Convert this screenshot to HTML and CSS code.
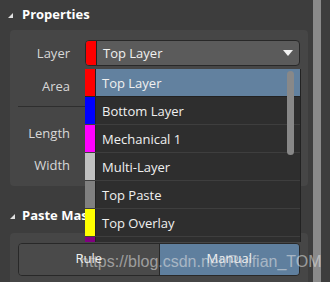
FILE: index.html
```html
<!DOCTYPE html>
<html lang="en">
<head>
    <meta charset="UTF-8">
    <title>Properties</title>
    <link rel="stylesheet" href="styles.css">
</head>
<body>
    <div class="frame">
        <div class="main">
            <div class="heading"><span class="tri"></span>Properties</div>
            <div class="panel">
                <div class="row">
                    <div class="label">Layer</div>
                    <div class="combo">
                        <span class="swatch" style="background:#ff0000"></span>
                        <span class="combo-text">Top Layer</span>
                        <svg class="arrow" width="10" height="6" viewBox="0 0 10 6"><path d="M0 0H10L5 6Z" fill="#f2f2f2"/></svg>
                    </div>
                </div>
                <div class="row short">
                    <div class="label">Area</div>
                </div>
                <div class="divider"></div>
                <div class="row">
                    <div class="label">Length</div>
                </div>
                <div class="row">
                    <div class="label">Width</div>
                </div>
            </div>

            <div class="heading second"><span class="tri"></span>Paste Mask Expansion</div>
            <div class="panel bottom">
                <div class="toggle">
                    <div class="opt">Rule</div>
                    <div class="opt on">Manual</div>
                </div>
            </div>
        </div>
        <div class="gutter"></div>
    </div>

    <!-- open dropdown list -->
    <div class="list">
        <div class="item sel"><span class="swatch" style="background:#ff0000"></span><span>Top Layer</span></div>
        <div class="item"><span class="swatch" style="background:#0000ff"></span><span>Bottom Layer</span></div>
        <div class="item"><span class="swatch" style="background:#ff00ff"></span><span>Mechanical 1</span></div>
        <div class="item"><span class="swatch" style="background:#c0c0c0"></span><span>Multi-Layer</span></div>
        <div class="item"><span class="swatch" style="background:#808080"></span><span>Top Paste</span></div>
        <div class="item"><span class="swatch" style="background:#ffff00"></span><span>Top Overlay</span></div>
        <div class="item"><span class="swatch" style="background:#800080"></span><span>Bottom Overlay</span></div>
        <div class="list-bar"></div>
    </div>

    <div class="mark">https://blog.csdn.net/Ruifian_TOM</div>
</body>
</html>
```

FILE: styles.css
```css
body {
    margin: 0;
    width: 330px;
    height: 282px;
    overflow: hidden;
    background-color: #3d3d3d;
    font-family: 'Open Sans', 'Noto Sans', sans-serif;
    font-size: 13px;
    color: #e6e6e6;
    position: relative;
}
.frame {
    display: flex;
    height: 282px;
}
.main {
    width: 313px;
}
.gutter {
    width: 8px;
    background-color: #8a8a8a;
    margin-right: 9px;
}
.heading {
    display: flex;
    align-items: center;
    height: 16px;
    margin-top: 6px;
    padding-left: 8px;
    font-weight: bold;
    color: #ffffff;
    white-space: nowrap;
}
.heading.second {
    margin-top: 21px;
    padding-left: 10px;
}
.tri {
    width: 0;
    height: 0;
    border-left: 5px solid transparent;
    border-bottom: 5px solid #e0e0e0;
    margin-right: 9px;
    margin-top: 2px;
}
.heading.second .tri {
    margin-right: 7px;
}
.panel {
    margin: 8px 5px 0 10px;
    background-color: #464646;
    border-radius: 4px;
    height: 156px;
    padding-top: 10px;
    box-sizing: border-box;
}
.panel.bottom {
    margin-top: 10px;
    height: 60px;
    padding: 10px 8px 0 8px;
}
.row {
    display: flex;
    align-items: center;
    height: 26px;
}
.row.short {
    height: 36px;
    margin-top: 2px;
}
.label {
    width: 60px;
    text-align: right;
    color: #d8d8d8;
}
.divider {
    height: 1px;
    background-color: #2e2e2e;
    margin: 2px 0 13px 8px;
    width: 67px;
}
.divider + .row {
    margin-bottom: 6px;
}
.combo {
    display: flex;
    align-items: center;
    margin-left: 15px;
    width: 215px;
    height: 26px;
    box-sizing: border-box;
    background-color: #5b5b5b;
    border: 1px solid #282828;
    border-radius: 4px;
    overflow: hidden;
}
.combo .swatch {
    height: 100%;
}
.combo-text {
    flex: 1;
    padding-left: 6px;
    color: #f0f0f0;
}
.arrow {
    margin-right: 6px;
}
.swatch {
    width: 10px;
    flex: none;
    border-right: 1px solid #222;
}
.toggle {
    display: flex;
    height: 31px;
    border: 1px solid #282828;
    border-radius: 4px;
    overflow: hidden;
}
.opt {
    flex: 1;
    display: flex;
    align-items: center;
    justify-content: center;
    padding-bottom: 3px;
    background-color: #4a4a4a;
    color: #f0f0f0;
}
.opt.on {
    background-color: #5f7f9e;
    border-left: 1px solid #282828;
}
.list {
    position: absolute;
    left: 85px;
    top: 69px;
    width: 215px;
    height: 173px;
    background-color: #2e2e2e;
    border-right: 1px solid #222;
    overflow: hidden;
}
.item {
    display: flex;
    height: 28px;
    border-bottom: 1px solid #3e3e3e;
    box-sizing: border-box;
}
.item span:last-child {
    display: flex;
    align-items: center;
    padding-left: 6px;
    flex: 1;
    color: #f0f0f0;
}
.item.sel span:last-child {
    background-color: #62819f;
}
.item.sel {
    border-bottom-color: #222;
}
.list-bar {
    position: absolute;
    left: 202px;
    top: 2px;
    width: 7px;
    height: 84px;
    border-radius: 4px;
    background-color: #888888;
}
.mark {
    position: absolute;
    left: 80px;
    top: 253px;
    font-family: 'Liberation Sans', Arial, sans-serif;
    font-size: 16px;
    color: rgba(230, 230, 230, 0.55);
    white-space: nowrap;
}
```
